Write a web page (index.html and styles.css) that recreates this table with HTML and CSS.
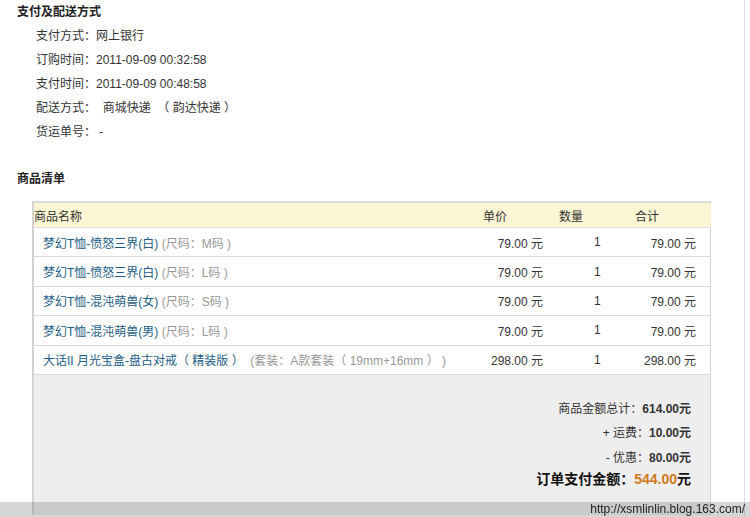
FILE: index.html
```html
<!DOCTYPE html>
<html lang="zh-CN">
<head>
<meta charset="utf-8">
<title>订单详情</title>
<link rel="stylesheet" href="styles.css">
</head>
<body>
<div class="page">
  <h2 class="sec-title">支付及配送方式</h2>
  <ul class="info">
    <li>支付方式：网上银行</li>
    <li>订购时间：2011-09-09 00:32:58</li>
    <li>支付时间：2011-09-09 00:48:58</li>
    <li>配送方式：&nbsp; 商城快递 &nbsp;（ 韵达快递 ）</li>
    <li>货运单号：&nbsp;-</li>
  </ul>
  <h2 class="sec-title list-title">商品清单</h2>
  <div class="goods">
    <table class="goods-table">
      <colgroup>
        <col class="c-name"><col class="c-price"><col class="c-qty"><col class="c-total">
      </colgroup>
      <thead>
        <tr>
          <th class="h-name">商品名称</th>
          <th class="h-price">单价</th>
          <th class="h-qty">数量</th>
          <th class="h-total">合计</th>
        </tr>
      </thead>
      <tbody>
        <tr>
          <td class="name"><span class="link">梦幻T恤-愤怒三界(白)</span> <span class="spec">(尺码：M码 )</span></td>
          <td class="price">79.00 元</td><td class="qty">1</td><td class="total">79.00 元</td>
        </tr>
        <tr>
          <td class="name"><span class="link">梦幻T恤-愤怒三界(白)</span> <span class="spec">(尺码：L码 )</span></td>
          <td class="price">79.00 元</td><td class="qty">1</td><td class="total">79.00 元</td>
        </tr>
        <tr>
          <td class="name"><span class="link">梦幻T恤-混沌萌兽(女)</span> <span class="spec">(尺码：S码 )</span></td>
          <td class="price">79.00 元</td><td class="qty">1</td><td class="total">79.00 元</td>
        </tr>
        <tr>
          <td class="name"><span class="link">梦幻T恤-混沌萌兽(男)</span> <span class="spec">(尺码：L码 )</span></td>
          <td class="price">79.00 元</td><td class="qty">1</td><td class="total">79.00 元</td>
        </tr>
        <tr>
          <td class="name"><span class="link">大话II 月光宝盒-盘古对戒（ 精装版 ）</span> &nbsp;<span class="spec">(套装：A款套装（ 19mm+16mm ） )</span></td>
          <td class="price">298.00 元</td><td class="qty">1</td><td class="total">298.00 元</td>
        </tr>
      </tbody>
    </table>
    <div class="summary">
      <p class="sum-line">商品金额总计：<b>614.00元</b></p>
      <p class="sum-line">+ 运费：<b>10.00元</b></p>
      <p class="sum-line">- 优惠：<b>80.00元</b></p>
      <p class="sum-final">订单支付金额：<span class="amount">544.00</span>元</p>
    </div>
  </div>
</div>
<div class="watermark">http://xsmlinlin.blog.163.com/</div>
</body>
</html>
```
FILE: styles.css
```css
html, body {
  margin: 0;
  padding: 0;
  background: #fff;
}
body {
  font-family: "Liberation Sans", "Noto Sans CJK SC", sans-serif;
  font-size: 12px;
  color: #333;
  height: 517px;
  overflow: hidden;
}
.page {
  width: 745px;
  height: 517px;
  border-right: 1px solid #dcdcdc;
  box-sizing: border-box;
}
.sec-title {
  margin: 0;
  padding-left: 17px;
  font-size: 12px;
  line-height: 24px;
  font-weight: bold;
  color: #222;
}
.info {
  list-style: none;
  margin: 0;
  padding: 0 0 0 36px;
}
.info li {
  line-height: 24px;
  height: 24px;
}
.list-title {
  margin-top: 23px;
}
.goods {
  margin: 10px 0 0 32px;
  width: 679px;
  border-left: 2px solid #d2d2d2;
  border-right: 1px solid #d2d2d2;
  border-top: 2px solid #dadada;
  box-sizing: border-box;
}
.goods-table {
  width: 100%;
  border-collapse: collapse;
  table-layout: fixed;
}
.c-name { width: 449px; }
.c-price { width: 72px; }
.c-qty { width: 75px; }
.c-total { width: 81px; }
.goods-table th {
  background: #fdf6d4;
  font-weight: normal;
  text-align: left;
  height: 24px;
  padding: 0;
  color: #333;
  border-bottom: 1px solid #dedede;
}
.h-name { padding-left: 0; }
.goods-table th.h-qty { padding-left: 4px; }
.goods-table th.h-total { padding-left: 5px; }
.goods-table td {
  height: 28.4px;
  padding: 0;
  border-bottom: 1px solid #dadada;
  white-space: nowrap;
}
.goods-table td.name { padding-left: 9px; }
.link { color: #1d5e86; }
.spec { color: #999; }
.goods-table td.price { text-align: right; padding-right: 12px; }
.goods-table td.qty { padding-left: 39px; }
.goods-table td.total { text-align: right; padding-right: 15px; }
.summary {
  background: #eeeeee;
  height: 140px;
  padding: 22px 19px 0 0;
  box-sizing: border-box;
  text-align: right;
}
.sum-line {
  margin: 0;
  line-height: 24.5px;
  color: #333;
}
.sum-line b { color: #333; }
.sum-final {
  margin: 0;
  line-height: 18px;
  font-size: 14px;
  font-weight: bold;
  color: #111;
}
.amount { color: #d07a1c; }
.watermark {
  position: fixed;
  left: 0;
  right: 0;
  bottom: 0;
  height: 15px;
  line-height: 15px;
  background: rgba(120, 120, 120, 0.3);
  color: #222;
  font-size: 12px;
  text-align: right;
  padding-right: 5px;
}
```
